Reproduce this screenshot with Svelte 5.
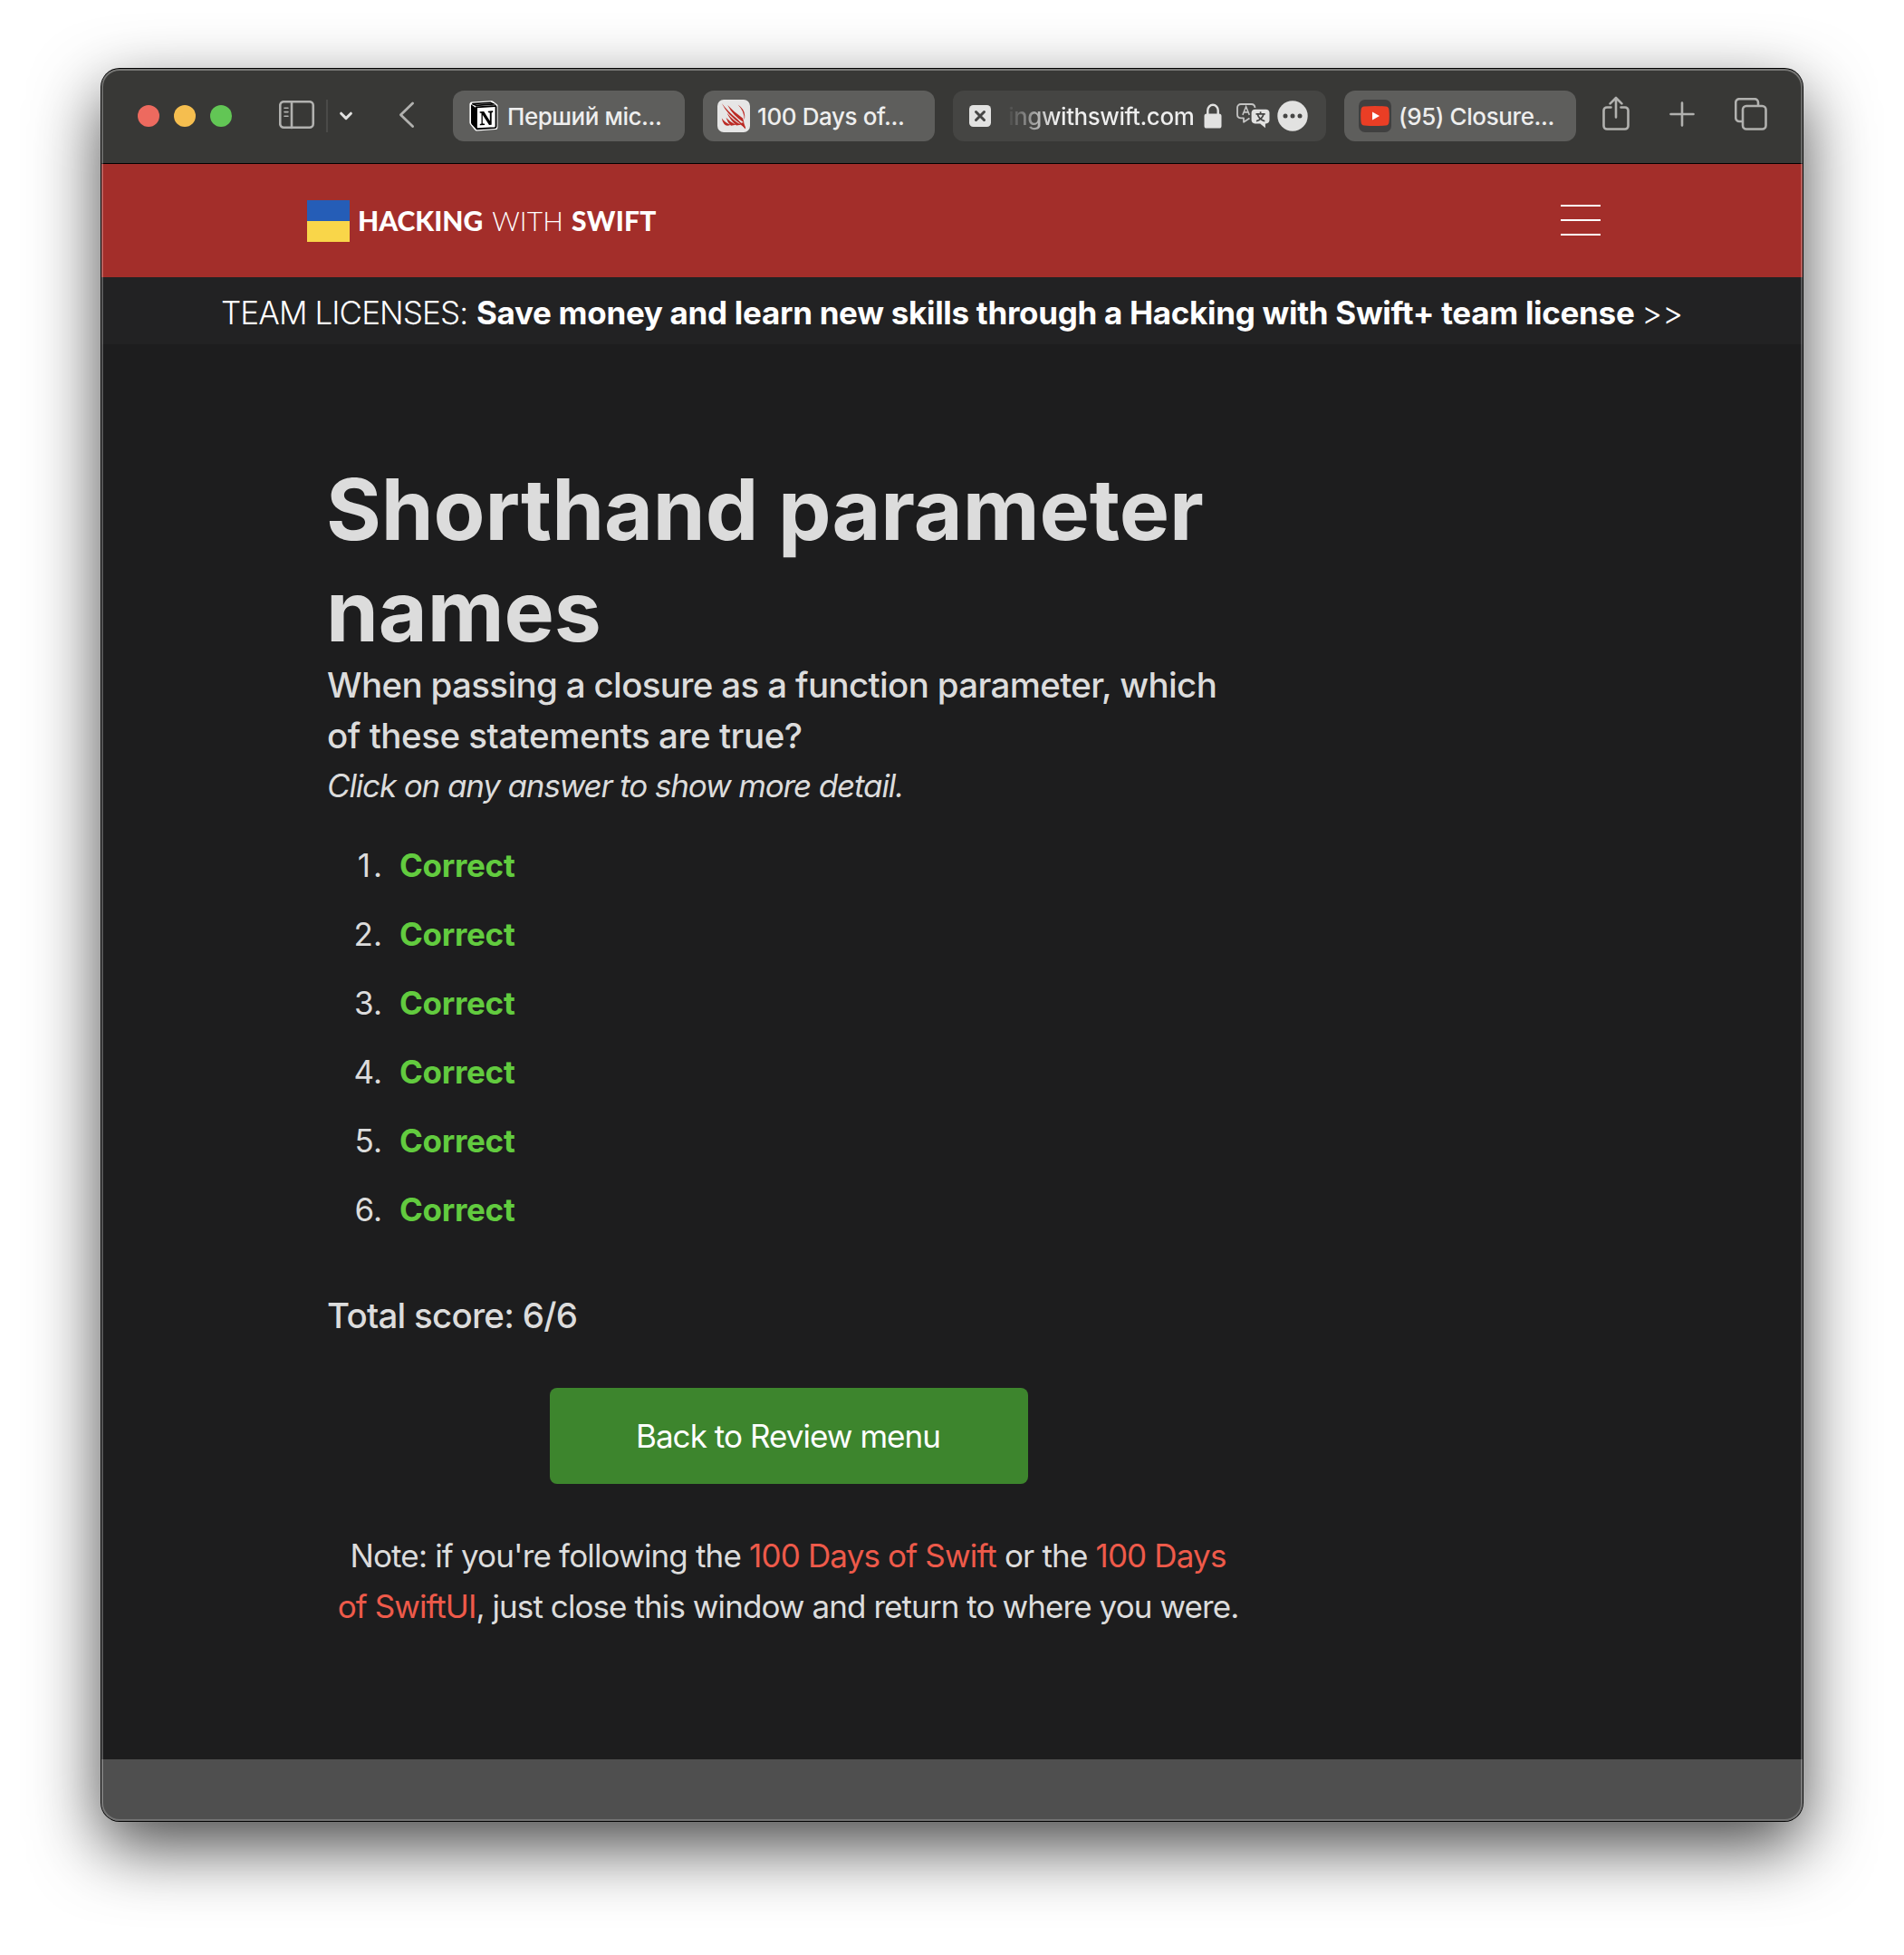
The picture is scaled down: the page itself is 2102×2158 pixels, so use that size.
<script>
  const answers = [1, 2, 3, 4, 5, 6];
</script>

<div class="desktop">
  <div class="window">
    <header class="toolbar">
      <div class="lights">
        <span class="light close"></span>
        <span class="light minimise"></span>
        <span class="light zoom"></span>
      </div>

      <svg class="icon sidebar" width="40" height="32" viewBox="0 0 40 32">
        <rect x="1.25" y="1.25" width="36.5" height="28.5" rx="4" />
        <path d="M14 1v29" />
        <path class="thin" d="M6 8.3h4M6 12.6h4M6 17.2h4" />
      </svg>
      <span class="divider"></span>
      <svg class="icon chevron" width="16" height="12" viewBox="0 0 16 12">
        <path d="M2.6 3.2 8 8.6l5.4-5.4" />
      </svg>
      <svg class="icon back" width="18" height="32" viewBox="0 0 18 32">
        <path d="M15.6 3 2.4 15.8 15.6 28.6" />
      </svg>

      <div class="tabs">
        <div class="tab">
          <svg class="notion" width="32" height="34" viewBox="0 0 32 34">
            <path d="M3 1.6 23.6.3c1.6-.1 2.2.1 3.3.9l3.6 2.7c.8.6 1 1 1 2v23c0 2-.6 3-2.6 3.2L9 33.4c-1.4.1-2.2-.2-3-1.200L1.700 27C.8 25.800.4 25 .4 23.900V4.500C.4 2.900 1.200 1.800 3 1.600Z" fill="#fff" />
            <path d="M3.300 3.600 23.300 2.200l3.400 1.700L8 5.400Z" fill="#fff" stroke="#000" stroke-width="1.600" />
            <path d="M2 4.200 7.400 8v23.200L2.800 26.300C2.200 25.500 2 25 2 24.200Z" fill="#000" />
            <path d="M8 7.400 28.300 6c1-.1 1.300.3 1.300 1.200v21.300c0 1-.3 1.500-1.400 1.600L9.300 31.200c-1 .1-1.400-.3-1.400-1.300Z" fill="#fff" stroke="#000" stroke-width="1.900" />
            <path d="M11.600 12.300 16.200 12l6.600 10.400v-9l-2-.4v-1.300l5.400-.4V12.700l-1.500.7v13.400l-2.700.2-7.200-11.300v9.600l2.300.5v1.200l-5.300.3v-1.200l1.700-.6V13.900l-1.900-.3Z" fill="#000" />
          </svg>
          <span class="label t1">Перший міс...</span>
        </div>
        <div class="tab">
          <svg class="hws" width="36" height="36" viewBox="0 0 36 36">
            <rect width="36" height="36" rx="7" fill="#e6e6e6" />
            <g fill="#bb2b25">
              <path d="M4.800 4Q11 12.500 22 21.500L31 30.500 30.800 32.500 26.500 27.500Q11 17 4.800 4Z" />
              <path d="M11.200 6Q18 13.500 28 20.500L29.500 25.500Q17 17.500 11.200 6Z" />
              <path d="M22.600 5.500Q30 10.500 30.200 17.500 30.400 20 29.600 22 30 13 22.600 5.500Z" />
              <path d="M4.800 20.500Q9 26 14.500 27.700 10 30 7.500 27 5.500 24.500 4.800 20.500Z" />
              <path d="M9.500 19.800Q14 25 20.500 27.700L15 28.700Q11 25 9.500 19.800Z" />
              <path d="M10.500 14.500Q17 23 26 27.700L21 28.400Q14 22.500 10.500 14.500Z" />
              <path d="M24 26.500 29 25 31.200 31.500Z" />
            </g>
          </svg>
          <span class="label t2">100 Days of...</span>
        </div>
        <div class="tab active">
          <svg class="close-tab" width="24" height="24" viewBox="0 0 24 24">
            <rect width="24" height="24" rx="4.500" fill="#e2e2e1" />
            <path d="m7.500 7.500 9 9m0-9-9 9" stroke="#454544" stroke-width="3" stroke-linecap="round" />
          </svg>
          <span class="label address">ingwithswift.com</span>
          <svg class="lock" width="20" height="28" viewBox="0 0 20 28">
            <rect x=".5" y="11.500" width="19" height="16" rx="2.600" fill="#e2e2e1" />
            <path d="M4.300 13V7.800a5.700 6 0 0 1 11.400 0V13" fill="none" stroke="#e2e2e1" stroke-width="2.400" />
          </svg>
          <svg class="translate" width="37" height="28" viewBox="0 0 37 28">
            <path d="M14.500 16.500 8 20.800V16.300H5.200C2.800 16.300 1 14.800 1 12.400V5C1 2.600 2.600 1 5 1h11.500C18.800 1 20.300 2.400 20.500 5" fill="none" stroke="#c4c4c3" stroke-width="1.800" stroke-linejoin="round" />
            <path d="M6.900 12.900 10.600 3.800l3.700 9.100M8.200 9.900h4.800" fill="none" stroke="#c4c4c3" stroke-width="1.600" />
            <path d="M20.500 6.800h12c2.300 0 4 1.500 4 3.800v8c0 2.300-1.500 3.800-3.800 3.800h-.8v4.800l-5.700-4.800h-5.700c-2.300 0-3.900-1.500-3.900-3.800v-8c0-2.300 1.600-3.800 3.900-3.800Z" fill="#e2e2e1" />
            <path d="M21.500 11.800h10.200M26.600 9.300v2.500M30 12c-1 3.800-4 6.500-8 7.800M23.300 12c1 3.800 4 6.500 8 7.800" fill="none" stroke="#454544" stroke-width="1.700" />
          </svg>
          <svg class="more" width="34" height="34" viewBox="0 0 34 34">
            <circle cx="17" cy="17" r="16.700" fill="#e2e2e1" />
            <g fill="#454544">
              <circle cx="9" cy="17" r="2.500" />
              <circle cx="17" cy="17" r="2.500" />
              <circle cx="25" cy="17" r="2.500" />
            </g>
          </svg>
        </div>
        <div class="tab">
          <svg class="youtube" width="36" height="36" viewBox="0 0 36 36">
            <rect width="36" height="36" rx="7" fill="#404040" />
            <path d="M6 7.500Q18 6.300 30 7.500 33 7.800 33.400 11q.8 7 0 14-.4 3.200-3.400 3.500-12 1.200-24 0Q3 28.200 2.600 25q-.8-7 0-14Q3 7.800 6 7.500Z" fill="#ea3e25" />
            <path d="M15 13.500 23 18l-8 4.500Z" fill="#fff" />
          </svg>
          <span class="label t4">(95) Closure...</span>
        </div>
      </div>

      <svg class="icon share" width="30" height="38" viewBox="0 0 30 38">
        <path d="M9.500 12.500H5a3.500 3.500 0 0 0-3.500 3.500v17A3.500 3.500 0 0 0 5 36.500h20a3.500 3.500 0 0 0 3.500-3.500V16a3.500 3.500 0 0 0-3.500-3.500h-4.500" />
        <path d="M15 23.500V2M8.600 8.400 15 2l6.400 6.400" />
      </svg>
      <svg class="icon plus" width="28" height="28" viewBox="0 0 28 28">
        <path d="M14 1.500v25M1.500 14h25" />
      </svg>
      <svg class="icon overview" width="36" height="36" viewBox="0 0 36 36">
        <path d="M8.500 26H5.200a4 4 0 0 1-4-4V5.200a4 4 0 0 1 4-4H22a4 4 0 0 1 4 4V8.500" />
        <rect x="9" y="9" width="25.500" height="25.500" rx="4" />
      </svg>
    </header>

    <nav class="site-bar">
      <div class="brand">
        <span class="flag"></span>
        <span class="wordmark"><b>HACKING</b><i>WITH</i><b class="swift">SWIFT</b></span>
      </div>
      <div class="menu"><span></span><span></span><span></span></div>
    </nav>

    <div class="promo"><span class="promo-light">TEAM LICENSES:</span> <strong>Save money and learn new skills through a Hacking with Swift+ team license</strong> <span class="arrows">&gt;&gt;</span></div>

    <main>
      <h1>Shorthand parameter<br />names</h1>
      <h2><span class="q1">When passing a closure as a function parameter, which</span><br /><span class="q2">of these statements are true?</span></h2>
      <p class="hint">Click on any answer to show more detail.</p>
      <ol>
        {#each answers as n}
          <li><span class="number">{n}.</span><strong>Correct</strong></li>
        {/each}
      </ol>
      <p class="score">Total score: 6/6</p>
      <button>Back to Review menu</button>
      <p class="note">
        <span class="n1">Note: if you're following the <em>100 Days of Swift</em> or the <em>100 Days</em></span><br />
        <span class="n2"><em>of SwiftUI</em>, just close this window and return to where you were.</span>
      </p>
    </main>

    <footer></footer>
  </div>
</div>

<style>
  :global(body) {
    margin: 0;
    background: #fff;
  }

  .desktop {
    box-sizing: border-box;
    width: 2102px;
    height: 2158px;
    padding: 76px 112px 0;
    overflow: hidden;
    font-family: Inter, "Liberation Sans", sans-serif;
  }

  .window {
    position: relative;
    display: flex;
    flex-direction: column;
    width: 1878px;
    height: 1934px;
    border-radius: 20px;
    background: #1d1d1e;
    box-shadow: 0 0 0 1px #000, 0 28px 76px rgba(0, 0, 0, 0.72);
  }

  /* Light rim drawn over the window's contents */
  .window::after {
    content: "";
    position: absolute;
    inset: 0;
    border-radius: 20px;
    box-shadow: inset 0 0 0 2px rgba(255, 255, 255, 0.2), inset 0 1px 0 1px rgba(255, 255, 255, 0.15);
    pointer-events: none;
  }

  .toolbar {
    display: flex;
    align-items: center;
    height: 104px;
    border-bottom: 1px solid #000;
    border-radius: 20px 20px 0 0;
    background: #383836;
    padding-left: 40px;
    flex: none;
  }

  .lights {
    display: flex;
    gap: 16px;
  }

  .light {
    width: 24px;
    height: 24px;
    border-radius: 50%;
  }

  .close { background: #ed6a5f; }
  .minimise { background: #f5be4f; }
  .zoom { background: #62c655; }

  svg {
    display: block;
    flex: none;
  }

  .icon {
    fill: none;
    stroke: #b1b1af;
    stroke-width: 2.6;
    stroke-linecap: round;
    stroke-linejoin: round;
  }

  .sidebar {
    margin-left: 52px;
    margin-bottom: 2px;
  }

  .sidebar .thin { stroke-width: 1.6; }

  .divider {
    width: 2px;
    height: 36px;
    margin: 0 12px;
    background: #4a4a48;
  }

  .chevron {
    margin-bottom: 1px;
    stroke: #e2e2e1;
    stroke-width: 3;
  }

  .back {
    margin-left: 50px;
    margin-bottom: 2px;
    stroke-width: 2.8;
  }

  .tabs {
    display: flex;
    gap: 20px;
    margin-left: 42px;
  }

  .tab {
    box-sizing: border-box;
    display: flex;
    align-items: center;
    width: 256px;
    height: 56px;
    padding-left: 16px;
    border-radius: 12px;
    background: #5e5e5c;
  }

  .tab.active {
    width: 412px;
    padding-left: 18px;
    background: #454543;
  }

  .notion { margin-left: 2px; }

  .label {
    margin-left: 9px;
    padding-top: 2px;
    color: #eee;
    font-size: 26px;
    font-weight: 500;
    line-height: 32px;
    white-space: nowrap;
  }

  .t1 { margin-left: 10px; letter-spacing: -0.45px; }
  .t2 { margin-left: 8px; letter-spacing: -0.4px; }
  .t4 { margin-left: 8px; letter-spacing: -0.4px; }

  .address {
    width: 205px;
    margin-left: 19px;
    letter-spacing: -0.45px;
    background: linear-gradient(90deg, #4a4a48 0, #eee 52px);
    background-clip: text;
    color: transparent;
  }

  .lock { margin-left: 11px; }
  .translate { margin-left: 16px; }
  .more { margin-left: 8px; }

  .share { margin-left: 29px; margin-bottom: 6px; }
  .plus { margin-left: 44px; margin-bottom: 4px; }
  .overview { margin-left: 44px; margin-bottom: 4px; }

  .site-bar {
    display: flex;
    align-items: center;
    justify-content: space-between;
    height: 125px;
    flex: none;
    padding: 0 223px 0 227px;
    background: #a32e2a;
  }

  .brand {
    display: flex;
    align-items: center;
  }

  .flag {
    width: 47px;
    height: 46px;
    background: linear-gradient(#255db7 50%, #f9d649 50%);
  }

  .wordmark {
    display: flex;
    margin: 0 0 1px 9px;
    color: #fff;
    font-family: Lato, "Liberation Sans", sans-serif;
    font-size: 30px;
    line-height: 40px;
  }

  .wordmark b {
    font-weight: 900;
  }

  .wordmark i {
    margin: 0 9px 0 10px;
    font-style: normal;
    font-weight: 300;
    letter-spacing: 0.1px;
  }

  .wordmark .swift { letter-spacing: 0.3px; }

  .menu {
    display: flex;
    flex-direction: column;
    gap: 14px;
    margin-bottom: 1px;
  }

  .menu span {
    width: 44px;
    height: 2px;
    background: #fff;
  }

  .promo {
    height: 74px;
    flex: none;
    background: #222223;
    color: #fff;
    font-size: 35px;
    line-height: 78px;
    text-align: center;
    white-space: nowrap;
  }

  .promo-light {
    font-weight: 300;
    letter-spacing: -0.9px;
  }

  .promo strong { letter-spacing: -0.3px; }

  .arrows {
    font-weight: 300;
    margin-left: -2px;
  }

  main {
    display: flex;
    flex-direction: column;
    width: 1018px;
    padding: 126px 0 0 250px;
    flex: 1;
    color: #dcdcdc;
    white-space: nowrap;
  }

  h1 {
    margin: 0 0 0 -2px;
    font-size: 93px;
    font-weight: 700;
    line-height: 112px;
    letter-spacing: -0.12px;
  }

  h2 {
    margin: -2px 0 0 -1px;
    font-size: 38.5px;
    font-weight: 500;
    line-height: 56px;
  }

  .q1 { letter-spacing: -0.66px; }
  .q2 { letter-spacing: -0.48px; }

  p { margin: 0; }

  .hint {
    margin: -1px 0 1px -1px;
    font-size: 35px;
    font-style: italic;
    line-height: 56px;
    letter-spacing: -1.14px;
  }

  ol {
    margin: 21px 0 0;
    padding: 0;
    list-style: none;
    font-size: 35px;
    line-height: 76px;
  }

  li { display: flex; }

  .number {
    width: 60px;
    margin-right: 19px;
    text-align: right;
  }

  /* The narrow "1" is spaced out to line up with the wider digits */
  li:first-child .number {
    width: 63px;
    margin-right: 16px;
    letter-spacing: 3px;
  }

  li strong {
    color: #62cb3f;
    font-weight: 700;
    letter-spacing: -0.3px;
  }

  .score {
    margin: 51px 0 0 -1px;
    font-size: 38.5px;
    font-weight: 500;
    line-height: 56px;
    letter-spacing: -0.75px;
  }

  button {
    align-self: center;
    width: 528px;
    height: 106px;
    margin-top: 52px;
    padding: 0 8px 0 6px;
    border: 0;
    border-radius: 8px;
    background: #3d852d;
    color: #fff;
    font: 400 35px Inter, "Liberation Sans", sans-serif;
    letter-spacing: -0.95px;
  }

  .note {
    margin: 51px 1px 0 -1px;
    font-size: 35px;
    line-height: 56px;
    text-align: center;
  }

  .n1 { letter-spacing: -0.84px; }
  .n2 { letter-spacing: -0.92px; }

  em {
    color: #ee5a4a;
    font-style: normal;
  }

  footer {
    height: 68px;
    flex: none;
    border-radius: 0 0 20px 20px;
    background: #4f4f4f;
  }
</style>
